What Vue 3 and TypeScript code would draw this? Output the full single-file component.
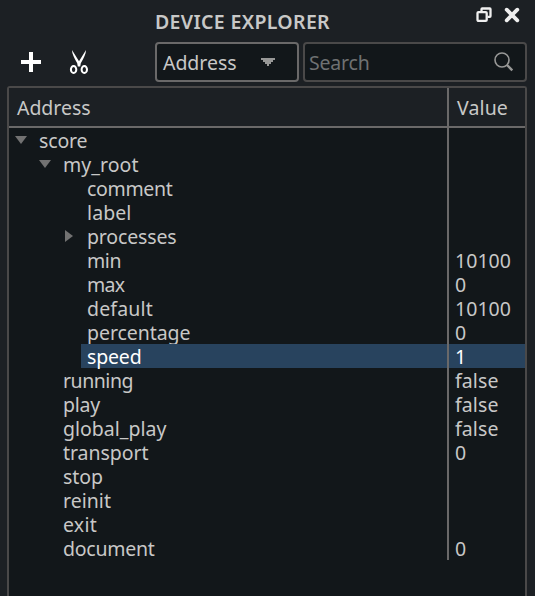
<script setup lang="ts">
import type { Directive } from 'vue'

interface Row {
  name: string
  depth: number
  width: number
  value?: string
  valueWidth?: number
  arrow?: 'open' | 'closed'
  selected?: boolean
}

const rows: Row[] = [
  { name: 'score', depth: 0, width: 48.5, arrow: 'open' },
  { name: 'my_root', depth: 1, width: 75.5, arrow: 'open' },
  { name: 'comment', depth: 2, width: 85.5 },
  { name: 'label', depth: 2, width: 44.5 },
  { name: 'processes', depth: 2, width: 89.5, arrow: 'closed' },
  { name: 'min', depth: 2, width: 34.2, value: '10100', valueWidth: 56 },
  { name: 'max', depth: 2, width: 37.2, value: '0', valueWidth: 11 },
  { name: 'default', depth: 2, width: 66, value: '10100', valueWidth: 56 },
  { name: 'percentage', depth: 2, width: 103.5, value: '0', valueWidth: 11 },
  { name: 'speed', depth: 2, width: 54.5, value: '1', valueWidth: 11, selected: true },
  { name: 'running', depth: 1, width: 70, value: 'false', valueWidth: 43.5 },
  { name: 'play', depth: 1, width: 37, value: 'false', valueWidth: 43.5 },
  { name: 'global_play', depth: 1, width: 103.5, value: 'false', valueWidth: 43.5 },
  { name: 'transport', depth: 1, width: 85.5, value: '0', valueWidth: 11 },
  { name: 'stop', depth: 1, width: 40 },
  { name: 'reinit', depth: 1, width: 48 },
  { name: 'exit', depth: 1, width: 34 },
  { name: 'document', depth: 1, width: 91.5, value: '0', valueWidth: 11 },
]

// Spreads the letters so the label takes up the given width.
const vFit: Directive<HTMLElement, number | undefined> = {
  mounted(el, { value }) {
    const count = el.textContent?.length ?? 0
    if (!value || !count) return
    const natural = el.getBoundingClientRect().width
    el.style.letterSpacing = `${(value - natural) / count}px`
  },
}
</script>

<template>
  <div class="panel">
    <header class="titlebar">
      <h1><span v-fit="175">DEVICE EXPLORER</span></h1>
      <div class="window-buttons">
        <svg width="16" height="16" viewBox="0 0 16 16">
          <path d="M5.5 4.2V2.2Q5.5 1.5 6.2 1.5H13.8Q14.5 1.5 14.5 2.2V9.1Q14.5 9.8 13.8 9.8H11.5" />
          <rect x="1.5" y="5.1" width="9.2" height="8.8" rx="1" />
        </svg>
        <svg class="close" width="16" height="16" viewBox="0 0 16 16">
          <path d="M2.7 2.7L13.3 13.3M13.3 2.7L2.7 13.3" />
        </svg>
      </div>
    </header>

    <div class="toolbar">
      <svg class="add" width="20" height="20" viewBox="0 0 20 20">
        <path d="M8 0h4v8h8v4h-8v8H8v-8H0V8h8z" />
      </svg>
      <svg class="cut" width="20" height="26" viewBox="0 0 20 26">
        <path class="blade" d="M3 1L10 12.3L17 1Q17 5.5 11.8 14.2L11.2 17.6H8.8L8.2 14.2Q3 5.5 3 1Z" />
        <ellipse cx="4.6" cy="20.5" rx="2.7" ry="3.5" />
        <ellipse cx="15.3" cy="20.5" rx="2.7" ry="3.5" />
      </svg>
      <div class="combo">
        <span v-fit="73.5">Address</span>
        <svg width="14" height="8" viewBox="0 0 14 8" shape-rendering="crispEdges">
          <path d="M0 0H14V2H12V4H10V6H8V8H6V6H4V4H2V2H0Z" />
        </svg>
      </div>
      <div class="search">
        <span v-fit="60.5">Search</span>
        <svg width="20" height="20" viewBox="0 0 20 20">
          <circle cx="8" cy="8" r="7" />
          <path d="M13 13L18.3 18.3" />
        </svg>
      </div>
    </div>

    <div class="tree">
      <div class="head">
        <div class="head-name"><span v-fit="73.5">Address</span></div>
        <div class="head-value"><span v-fit="51">Value</span></div>
      </div>
      <div
        v-for="row in rows"
        :key="row.name"
        class="row"
        :class="['depth-' + row.depth, { selected: row.selected }]"
      >
        <div class="name">
          <div class="branch">
            <svg v-if="row.arrow === 'open'" width="12" height="8" viewBox="0 0 12 8">
              <path d="M0 0H12L6 8Z" />
            </svg>
            <svg v-else-if="row.arrow === 'closed'" class="closed" width="8" height="12" viewBox="0 0 8 12">
              <path d="M0 0L8 6L0 12Z" />
            </svg>
          </div>
          <div class="label"><span v-fit="row.width">{{ row.name }}</span></div>
        </div>
        <div class="value"><span v-if="row.value" v-fit="row.valueWidth">{{ row.value }}</span></div>
      </div>
    </div>
  </div>
</template>

<style>
body {
  background: #1c2024;
}
</style>

<style scoped>
.panel {
  box-sizing: border-box;
  display: flex;
  flex-direction: column;
  width: 535px;
  height: 596px;
  padding: 0 8px 0 7px;
  overflow: hidden;
  background: #1c2024;
  color: #c8c8c7;
  font: 19.5px/24px 'Noto Sans', sans-serif;
  white-space: pre;
}
svg {
  display: block;
  flex: none;
}
span {
  display: inline-block;
}
.titlebar {
  display: flex;
  height: 42px;
  padding-left: 148px;
}
h1 {
  flex: 1;
  margin: 0;
  padding-top: 10px;
  font-size: 19.5px;
  font-weight: 600;
  line-height: 24px;
}
.window-buttons {
  display: flex;
  gap: 12px;
  padding: 7px 7px 0 0;
}
.window-buttons svg {
  fill: none;
  stroke: #efefef;
  stroke-width: 2.3;
}
.window-buttons .close {
  stroke-width: 3.8;
  stroke-linecap: round;
}
.toolbar {
  display: flex;
  height: 40px;
  margin-bottom: 4px;
}
.add {
  margin: 10px 28px 0 14px;
  fill: #fff;
}
.cut {
  margin: 7px 66px 0 0;
  fill: none;
  stroke: #fff;
  stroke-width: 2;
}
.blade {
  fill: #fff;
  stroke: none;
}
.combo,
.search {
  box-sizing: border-box;
  display: flex;
  align-items: center;
  justify-content: space-between;
  border: 2px solid #6a6969;
  border-radius: 4px;
  background: #12171a;
}
.combo {
  width: 144px;
  margin: 0 4px 0 auto;
  padding: 0 22px 0 6px;
}
.combo svg {
  margin-bottom: 1px;
  fill: #989897;
}
.combo span,
.search span {
  padding-top: 1px;
}
.search {
  width: 224px;
  padding: 0 11px 0 4px;
  border-color: #4a4949;
  color: #6f7172;
}
.search svg {
  fill: none;
  stroke: #989897;
  stroke-width: 1.6;
}
.search path {
  stroke-width: 2.4;
}
.tree {
  flex: 1;
  border: 2px solid #4a4949;
  border-bottom: 0;
  border-radius: 3px 3px 0 0;
  background: #12171a;
}
.head {
  display: flex;
  height: 38px;
  border-bottom: 2px solid #6a6969;
  background: #1c2024;
  line-height: 40px;
}
.head-name {
  box-sizing: border-box;
  width: 438px;
  padding-left: 8px;
}
.head-value {
  flex: 1;
  padding-left: 8px;
  border-left: 2px solid #6a6969;
}
.row {
  display: flex;
  height: 24px;
}
.name {
  display: flex;
  width: 438px;
}
.branch {
  box-sizing: border-box;
  width: 24px;
  padding: 8px 0 0 6px;
}
.branch svg {
  fill: #727272;
}
.branch .closed {
  margin: -2px 0 0 2px;
}
.depth-1 .branch {
  width: 48px;
  padding-left: 30px;
}
.depth-2 .branch {
  width: 72px;
  padding-left: 54px;
}
.label,
.value {
  flex: 1;
  padding: 2px 0 0 6px;
  line-height: 22px;
}
.value {
  border-left: 2px solid #6a6969;
}
.selected .label,
.selected .value {
  background: #28435e;
  color: #fff;
}
</style>
